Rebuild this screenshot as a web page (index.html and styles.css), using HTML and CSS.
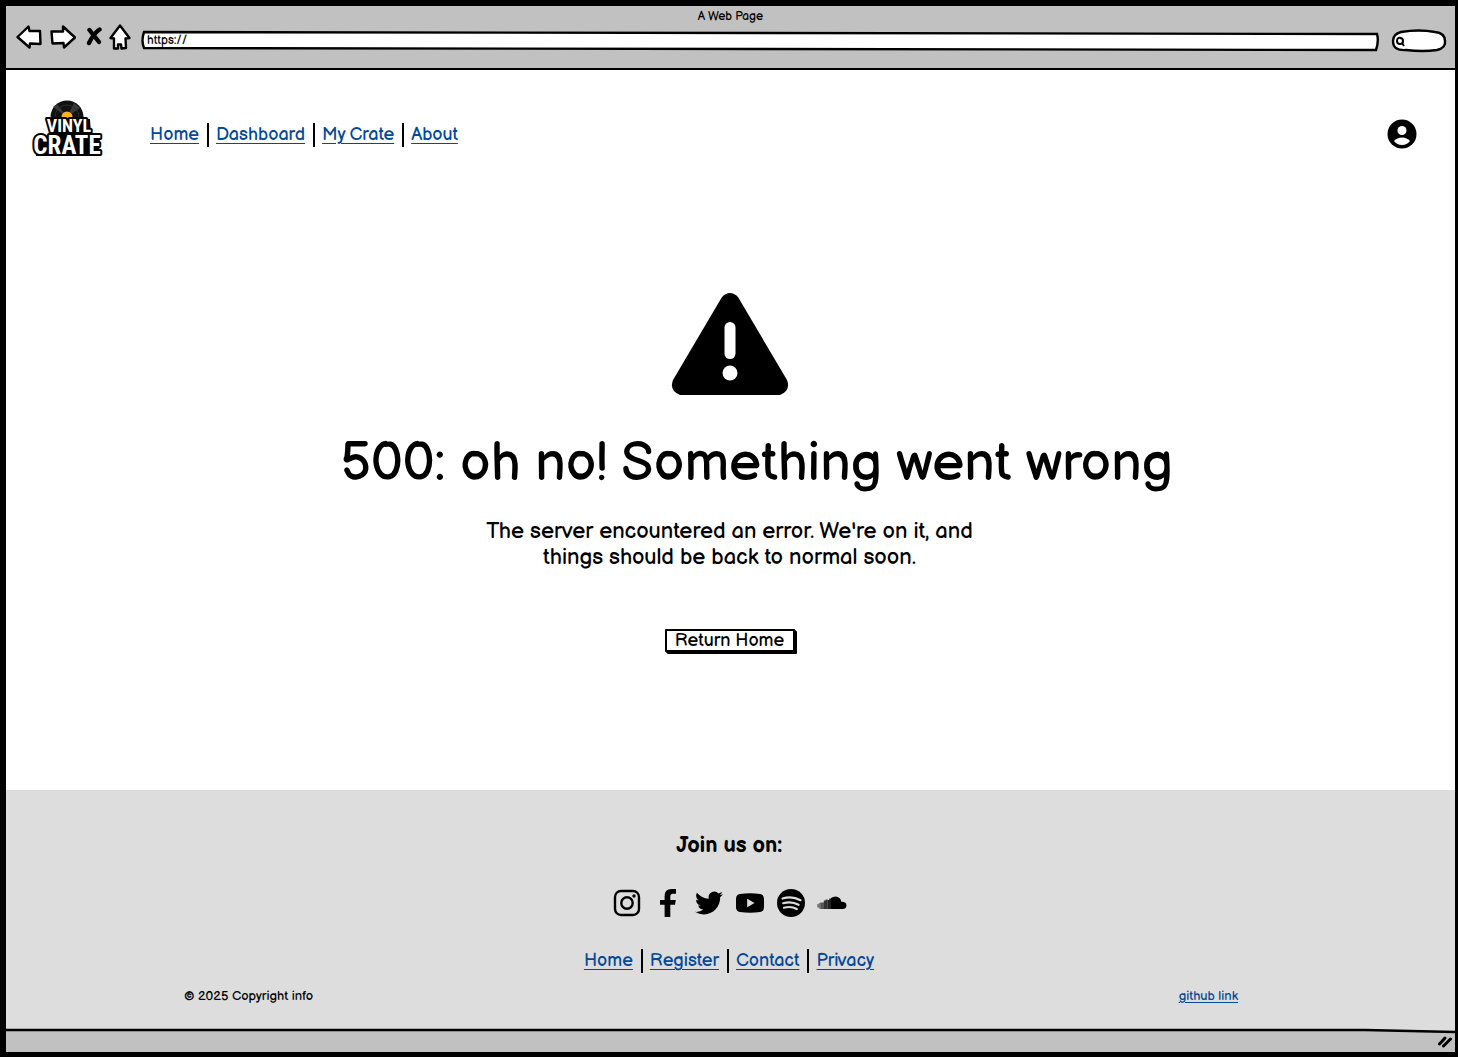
FILE: index.html
```html
<!DOCTYPE html>
<html lang="en">
<head>
<meta charset="utf-8">
<meta name="viewport" content="width=device-width, initial-scale=1">
<title>Vinyl Crate – Server error</title>
<link rel="stylesheet" href="styles.css">
</head>
<body>
<div class="window">
  <div class="chrome">
    <div class="chrome-title">A Web Page</div>
    <div class="toolbar">
      <div class="tools">
        <button class="tool" type="button" aria-label="Back">
          <svg width="26" height="26" viewBox="0 0 26 26"><path d="M1.500 13 L12.500 2.500 L13.500 7 L24 7 L24.500 20 L14 19.500 L13.500 23.500 Z"/></svg>
        </button>
        <button class="tool" type="button" aria-label="Forward">
          <svg width="26" height="26" viewBox="0 0 26 26"><path d="M1.500 7.500 L13 7.500 L13 2.500 L25 13.500 L14 23.500 L13.500 19 L2.500 19.500 Z"/></svg>
        </button>
        <button class="tool tool-stop" type="button" aria-label="Stop">
          <svg width="16" height="20" viewBox="0 0 16 20"><path class="cross" d="M3.500 3 L13 15 M13.500 2.500 Q8 6 3 16"/></svg>
        </button>
        <button class="tool" type="button" aria-label="Home page">
          <svg width="22" height="26" viewBox="0 0 22 26"><path d="M11 1.500 L1.500 14 L5 14.500 L5 24.500 L9 24.500 L9 20.500 L12 20.500 L12.500 24.500 L17 24 L16.500 14.500 L20.500 14 Z"/></svg>
        </button>
      </div>
      <div class="address">
        <svg class="sketch" viewBox="0 0 1238 20" preserveAspectRatio="none" aria-hidden="true"><path d="M3 1 L1236 3 Q1238 10 1235 19 L3 17 Q0 10 3 1 Z"/></svg>
        <input type="text" value="https://" aria-label="Address">
      </div>
      <div class="search">
        <svg class="sketch" viewBox="0 0 56 24" preserveAspectRatio="none" aria-hidden="true"><path d="M10 3 Q28 0 44 3 Q54 4 54 12 Q55 19 46 21 Q32 23 15 21 Q2 22 2 12 Q2 5 10 3 Z"/></svg>
        <svg class="lens" width="12" height="12" viewBox="0 0 12 12" aria-hidden="true"><path d="M6 2 Q2 1 2 5 Q2 8 5 8 Q8 8 8 5 Q8 2 5 2 M7 7 L9 10"/></svg>
        <input type="search" aria-label="Search">
      </div>
    </div>
  </div>

  <header class="site-header">
    <a class="logo" href="#" aria-label="Vinyl Crate">
      <svg width="74" height="60" viewBox="0 0 74 60">
        <circle cx="37" cy="17" r="16.500" fill="#111"/>
        <path d="M37 17 L23 7 L27 4 Z M37 17 L44 3 L50 8 Z" fill="#383838"/>
        <circle cx="37" cy="17" r="12" fill="none" stroke="#2c2c2c" stroke-width="1"/>
        <circle cx="37" cy="17" r="5.500" fill="#f8b428"/>
        <path d="M18 20 L60 19 L61 35 L70 37 L69 56 L6 56 L6 38 L20 35 Z" fill="#000"/>
        <text class="logo-small" x="39" y="32" text-anchor="middle">VINYL</text>
        <text class="logo-big" x="37" y="54" text-anchor="middle">CRATE</text>
      </svg>
    </a>
    <nav aria-label="Main">
      <ul class="links">
        <li><a href="#">Home</a></li>
        <li><a href="#">Dashboard</a></li>
        <li><a href="#">My Crate</a></li>
        <li><a href="#">About</a></li>
      </ul>
    </nav>
    <a class="account" href="#" aria-label="Account">
      <svg width="30" height="30" viewBox="0 0 30 30"><circle cx="15" cy="15" r="14.500"/><circle cx="15" cy="11.500" r="4.500" fill="#fff"/><path d="M7 22 Q10 18.500 15 18.500 Q20 18.500 23 22 Q20 26 15 26 Q10 26 7 22 Z" fill="#fff"/></svg>
    </a>
  </header>

  <main>
    <svg class="warning" width="118" height="102" viewBox="0 0 118 102" aria-hidden="true">
      <path d="M51 4 Q59 -4 67 4 L116 87 Q120 98 109 102 L9 102 Q-2 98 2 87 Z"/>
      <rect x="53.500" y="29" width="11" height="37" rx="5.500" fill="#fff"/>
      <circle cx="59" cy="80" r="7.500" fill="#fff"/>
    </svg>
    <h1>500: oh no! Something went wrong</h1>
    <p class="message">The server encountered an error. We're on it, and<br>things should be back to normal soon.</p>
    <button class="return" type="button">Return Home</button>
  </main>

  <footer>
    <h2>Join us on:</h2>
    <ul class="social">
      <li><a href="#" aria-label="Instagram"><svg viewBox="0 0 28 28"><rect x="2" y="2" width="24" height="24" rx="6" fill="none" stroke="#000" stroke-width="2.400"/><circle cx="14" cy="14" r="5.700" fill="none" stroke="#000" stroke-width="2.400"/><circle cx="21" cy="7" r="1.700"/></svg></a></li>
      <li><a href="#" aria-label="Facebook"><svg viewBox="0 0 28 28"><path d="M10.600 28 V15.700 H6 V11 H10.600 V7 Q10.600 0 17.500 0 H22 V4.700 H18.800 Q16.300 4.700 16.300 7.200 V11 H21.800 L21 15.700 H16.300 V28 Z"/></svg></a></li>
      <li><a href="#" aria-label="Twitter"><svg viewBox="0 0 24 24"><path d="M23.953 4.570a10 10 0 01-2.825.775 4.958 4.958 0 002.163-2.723c-.951.555-2.005.959-3.127 1.184a4.920 4.920 0 00-8.384 4.482C7.690 8.095 4.067 6.130 1.640 3.162a4.822 4.822 0 00-.666 2.475c0 1.710.870 3.213 2.188 4.096a4.904 4.904 0 01-2.228-.616v.060a4.923 4.923 0 003.946 4.827 4.996 4.996 0 01-2.212.085 4.936 4.936 0 004.604 3.417 9.867 9.867 0 01-6.102 2.105c-.390 0-.779-.023-1.170-.067a13.995 13.995 0 007.557 2.209c9.053 0 13.998-7.496 13.998-13.985 0-.210 0-.420-.015-.630A9.935 9.935 0 0024 4.590z"/></svg></a></li>
      <li><a href="#" aria-label="YouTube"><svg viewBox="0 0 28 28"><path d="M4 5 Q14 3.500 24 5 Q28 5.500 28 10 V18 Q28 22.500 24 23 Q14 24.500 4 23 Q0 22.500 0 18 V10 Q0 5.500 4 5 Z"/><path d="M11.200 9.700 L18.500 14 L11.200 18.300 Z" fill="#ddd"/></svg></a></li>
      <li><a href="#" aria-label="Spotify"><svg viewBox="0 0 28 28"><circle cx="14" cy="14" r="14"/><path d="M5.500 9.500 Q15 6.500 23.500 11.200 M6.200 14.200 Q14.500 11.800 21.600 15.800 M7 18.700 Q14 16.800 19.800 20" fill="none" stroke="#ddd" stroke-width="2.200" stroke-linecap="round"/></svg></a></li>
      <li><a href="#" aria-label="SoundCloud"><svg viewBox="0 0 28 28"><path d="M13 20 V9 Q15 7.500 17.500 7.500 Q22.500 7.700 23.300 12.800 Q28.300 12.500 28.500 16.500 Q28.200 20 24.500 20 Z"/><path d="M12.200 9.500 V20 M10.400 11 V20" stroke="#222" stroke-width="2"/><path d="M8.600 10.500 V20 M6.800 11.500 V20" stroke="#333" stroke-width="2"/><path d="M5 13.500 V20 M3.200 13.500 V20" stroke="#555" stroke-width="2"/><path d="M1.500 14 V19.500 M0 15 V18.500" stroke="#777" stroke-width="1.500"/></svg></a></li>
    </ul>
    <nav aria-label="Footer">
      <ul class="links">
        <li><a href="#">Home</a></li>
        <li><a href="#">Register</a></li>
        <li><a href="#">Contact</a></li>
        <li><a href="#">Privacy</a></li>
      </ul>
    </nav>
    <div class="legal">
      <span>© 2025 Copyright info</span>
      <a href="#">github link</a>
    </div>
  </footer>

  <div class="status">
    <svg class="sketch" viewBox="0 0 1450 24" preserveAspectRatio="none" aria-hidden="true"><path class="gap" d="M0 0 H1450 V4 L1360 2 L0 2 Z"/><path class="edge" d="M0 2 L1360 2 L1450 4"/></svg>
    <svg class="grip" width="14" height="14" viewBox="0 0 14 14" aria-hidden="true"><path d="M1.500 9 L7 3 M5.500 11 L12.500 4"/></svg>
  </div>
</div>
</body>
</html>
```
FILE: styles.css
```css
* {
  box-sizing: border-box;
}

body {
  margin: 0;
  background: #000;
  color: #000;
  font-family: "Balsamiq Sans", Inter, "Liberation Sans", sans-serif;
  font-weight: 500;
}

button,
input {
  font: inherit;
  color: inherit;
}

ul {
  margin: 0;
  padding: 0;
  list-style: none;
}

a {
  color: #04489a;
  text-underline-offset: 3px;
}

svg {
  display: block;
}

.window {
  display: flex;
  flex-direction: column;
  min-height: 100vh;
  border: solid #000;
  border-width: 6px 3px 5px 6px;
  background: #fff;
}

/* Browser chrome */
.chrome {
  border-bottom: 2px solid #000;
  background: #c1c1c1;
}

.chrome-title {
  padding-top: 3px;
  font-size: 12px;
  line-height: 16px;
  text-align: center;
}

.toolbar {
  display: flex;
  align-items: center;
  gap: 10px;
  height: 43px;
  padding: 0 8px 11px 10px;
}

.tools {
  display: flex;
  align-items: center;
  gap: 8px;
  margin-bottom: 8px;
}

.tool {
  padding: 0;
  border: 0;
  background: none;
}

.tool path {
  fill: #fff;
  stroke: #000;
  stroke-width: 2.400;
  stroke-linejoin: round;
}

.tool .cross {
  fill: none;
  stroke-width: 4.400;
  stroke-linecap: round;
}

.tool-stop {
  margin: 0 -1px 0 2px;
}

.address,
.search {
  display: flex;
  position: relative;
}

.address {
  flex: 1;
  height: 20px;
  margin-right: 2px;
}

.search {
  width: 56px;
  height: 24px;
}

.sketch {
  position: absolute;
  inset: 0;
  width: 100%;
  height: 100%;
  overflow: visible;
}

.sketch path {
  fill: #fff;
  stroke: #000;
  stroke-width: 2.400;
  vector-effect: non-scaling-stroke;
}

.sketch .edge {
  fill: none;
}

.sketch .gap {
  fill: #ddd;
  stroke: none;
}

.address input,
.search input {
  position: relative;
  width: 100%;
  min-width: 0;
  padding: 0 6px;
  border: 0;
  outline: 0;
  background: transparent;
  font-size: 12px;
}

.address input {
  height: 18px;
}

.lens {
  position: absolute;
  top: 7px;
  left: 4px;
  fill: none;
  stroke: #000;
  stroke-width: 2;
}

/* Site header */
.site-header {
  display: flex;
  align-items: center;
  gap: 46px;
  padding: 30px 38px 30px 24px;
}

.logo svg {
  overflow: visible;
}

.logo text {
  font-family: "Roboto Condensed", "Open Sans Condensed", "Liberation Sans Narrow", "Liberation Sans", sans-serif;
  font-weight: 700;
  fill: #fff;
  stroke: #000;
  stroke-width: 4;
  stroke-linejoin: round;
  paint-order: stroke;
}

.logo-small {
  font-size: 18px;
}

.logo-big {
  font-size: 25px;
}

.account {
  margin-left: auto;
}

.links {
  display: flex;
  justify-content: center;
  font-size: 18px;
  line-height: 24px;
}

.links li + li {
  margin-left: 8px;
  padding-left: 7px;
  border-left: 2px solid #000;
}

.site-header nav {
  margin-top: 10px;
}

.account {
  margin-top: 8px;
}

/* Error message */
main {
  display: flex;
  flex: 1;
  flex-direction: column;
  align-items: center;
  padding: 103px 26px 24px 24px;
}

h1 {
  margin: 32px 0 0 54px;
  font-size: 54px;
  font-weight: 500;
  line-height: 74px;
}

.message {
  margin: 18px 0 0;
  font-size: 22px;
  line-height: 26px;
  text-align: center;
}

.return {
  margin-top: 58px;
  width: 130px;
  height: 23px;
  padding: 0;
  border: 2px solid #000;
  border-radius: 1px;
  background: #fff;
  box-shadow: 1px 1px 0 #000, 2px 2px 0 #000;
  font-size: 18px;
  line-height: 18px;
}

/* Footer */
footer {
  padding: 42px 0 24px;
  background: #ddd;
}

h2 {
  margin: 0 2px 0 0;
  font-size: 22px;
  font-weight: 700;
  line-height: 28px;
  text-align: center;
}

.social {
  display: flex;
  justify-content: center;
  gap: 13px;
  margin: 29px 2px 32px 0;
}

.social svg {
  width: 28px;
  height: 28px;
  overflow: visible;
}

footer nav {
  padding-right: 3px;
}

.legal {
  display: flex;
  justify-content: space-between;
  margin-top: 15px;
  padding: 0 217px 0 178px;
  font-size: 13px;
  line-height: 16px;
}

.legal a {
  text-underline-offset: 2px;
}

.status {
  display: flex;
  position: relative;
  align-items: center;
  justify-content: flex-end;
  height: 24px;
  padding: 4px 3px 0;
  background: #c1c1c1;
}

.grip {
  fill: none;
  stroke: #000;
  stroke-width: 3;
  stroke-linecap: round;
}
```
